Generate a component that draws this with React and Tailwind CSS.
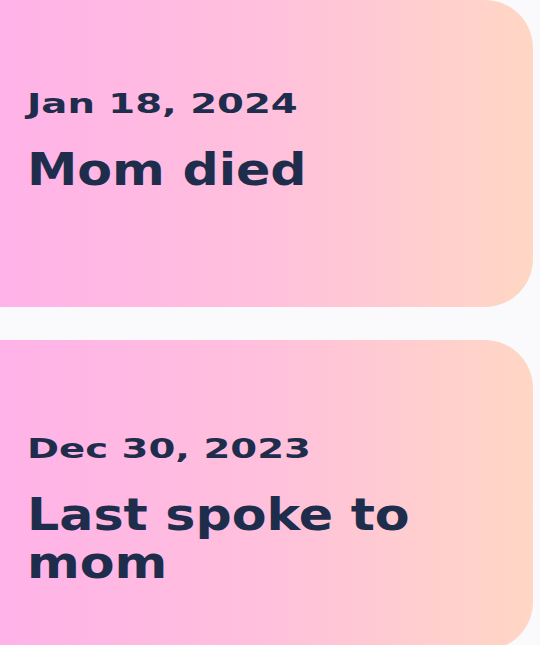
export default function App() {
  const cards = [
    { date: "Jan 18, 2024", title: "Mom died", h: "h-[307px]", pt: "pt-[86px]" },
    { date: "Dec 30, 2023", title: "Last spoke to mom", h: "h-[310px]", pt: "pt-[91px]" },
  ];
  return (
    <div className="w-[540px] h-[645px] overflow-hidden bg-[#fafafc] flex flex-col gap-[33px]" style={{ fontFamily: '"DejaVu Sans", sans-serif' }}>
      {cards.map((c, i) => (
        <div
          key={i}
          className={`${c.h} ${c.pt} shrink-0 w-[533px] rounded-r-[48px] bg-gradient-to-r from-[#ffb2e8] via-[#ffc0dc] to-[#ffd7c4] pl-[27px] text-[#1f2d4d]`}
        >
          <div className="origin-left scale-x-[1.43] text-[27px] font-bold leading-[36px] w-[340px]">{c.date}</div>
          <div className="mt-[24px] origin-left scale-x-[1.15] text-[44px] font-bold leading-[48px] w-[410px]">{c.title}</div>
        </div>
      ))}
    </div>
  );
}
